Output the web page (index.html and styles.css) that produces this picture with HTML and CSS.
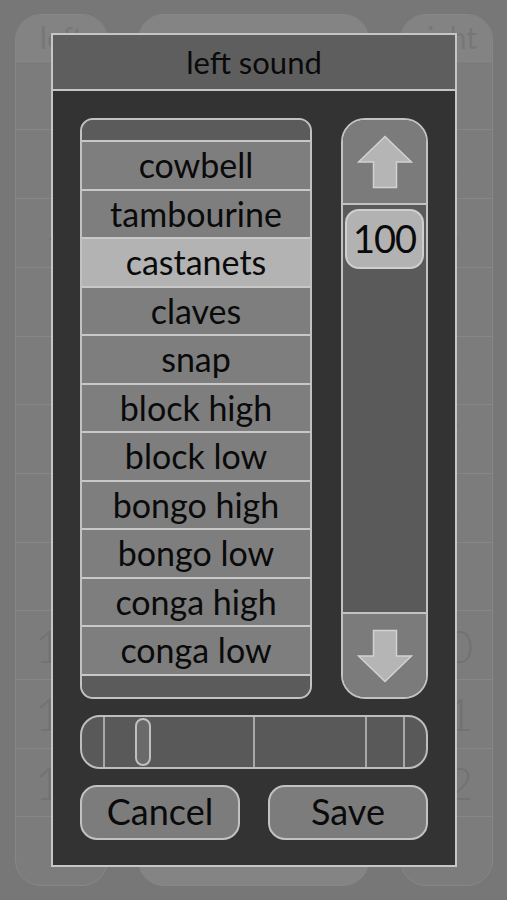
FILE: index.html
```html
<!DOCTYPE html>
<html>
<head>
<meta charset="utf-8">
<link rel="stylesheet" href="styles.css">
</head>
<body>
<div class="bg">
  <div class="card side">
    <div class="card-head">left</div>
    <div class="card-row"><span>2</span></div>
    <div class="card-row"><span>3</span></div>
    <div class="card-row"><span>4</span></div>
    <div class="card-row"><span>5</span></div>
    <div class="card-row"><span>6</span></div>
    <div class="card-row"><span>7</span></div>
    <div class="card-row"><span>8</span></div>
    <div class="card-row"><span>9</span></div>
    <div class="card-row"><span>10</span></div>
    <div class="card-row"><span>11</span></div>
    <div class="card-row"><span>12</span></div>
    <div class="card-row"></div>
  </div>
  <div class="card center"></div>
  <div class="card side">
    <div class="card-head">right</div>
    <div class="card-row"><span>2</span></div>
    <div class="card-row"><span>3</span></div>
    <div class="card-row"><span>4</span></div>
    <div class="card-row"><span>5</span></div>
    <div class="card-row"><span>6</span></div>
    <div class="card-row"><span>7</span></div>
    <div class="card-row"><span>8</span></div>
    <div class="card-row"><span>9</span></div>
    <div class="card-row"><span>10</span></div>
    <div class="card-row"><span>11</span></div>
    <div class="card-row"><span>12</span></div>
    <div class="card-row"></div>
  </div>
</div>

<div class="dialog">
  <div class="dialog-title">left sound</div>
  <div class="dialog-body">
    <div class="top">
      <div class="list">
        <div class="list-cap"></div>
        <div class="item">cowbell</div>
        <div class="item">tambourine</div>
        <div class="item selected">castanets</div>
        <div class="item">claves</div>
        <div class="item">snap</div>
        <div class="item">block high</div>
        <div class="item">block low</div>
        <div class="item">bongo high</div>
        <div class="item">bongo low</div>
        <div class="item">conga high</div>
        <div class="item">conga low</div>
        <div class="list-foot"></div>
      </div>
      <div class="stepper">
        <div class="step-btn">
          <svg width="56" height="54" viewBox="0 0 56 54"><polygon points="28,1.5 1.5,27 16.5,27 16.5,52.5 39.5,52.5 39.5,27 54.5,27" class="arrow"/></svg>
        </div>
        <div class="track">
          <div class="badge">100</div>
        </div>
        <div class="step-btn">
          <svg width="56" height="54" viewBox="0 0 56 54"><polygon points="28,52.5 1.5,27 16.5,27 16.5,1.5 39.5,1.5 39.5,27 54.5,27" class="arrow"/></svg>
        </div>
      </div>
    </div>
    <div class="slider">
      <div class="tick t1"></div>
      <div class="tick t2"></div>
      <div class="tick t3"></div>
      <div class="tick t4"></div>
      <div class="thumb"></div>
    </div>
    <div class="buttons">
      <div class="btn">Cancel</div>
      <div class="btn">Save</div>
    </div>
  </div>
</div>
</body>
</html>
```

FILE: styles.css
```css
* { box-sizing: border-box; }
html, body { margin: 0; padding: 0; }
body {
  width: 507px;
  height: 900px;
  background: #777777;
  font-family: "Lato", "Open Sans", sans-serif;
  position: relative;
  overflow: hidden;
}

/* background app */
.bg {
  display: flex;
  padding: 14px 0 0 15px;
}
.card {
  height: 872px;
  border: 1px solid #878787;
  border-radius: 26px;
  background: #7c7c7c;
  overflow: hidden;
}
.side { width: 93px; display: flex; flex-direction: column; }
.center { width: 231px; margin: 0 31px 0 30px; background: #848484; }
.card-head {
  height: 48px;
  background: #838383;
  color: #777777;
  font-size: 30px;
  text-align: center;
  line-height: 44px;
}
.card-row {
  height: 72px;
  border-top: 1px solid #878787;
  display: flex;
  align-items: center;
  justify-content: center;
  color: #727272;
  font-size: 46px;
  font-weight: 300;
}

/* dialog */
.dialog {
  position: absolute;
  left: 51px;
  top: 33px;
  width: 406px;
  height: 834px;
  border: 2px solid #c6c6c6;
  background: #333333;
  display: flex;
  flex-direction: column;
}
.dialog-title {
  height: 56px;
  background: #5e5e5e;
  border-bottom: 2px solid #c6c6c6;
  color: #0a0a0a;
  font-size: 31px;
  text-align: center;
  line-height: 54px;
}
.dialog-body {
  padding: 27px 27px 26px 27px;
  display: flex;
  flex-direction: column;
  gap: 16px;
}
.top {
  display: flex;
  justify-content: space-between;
  height: 581px;
}

.list {
  width: 232px;
  border: 2px solid #c2c2c2;
  border-radius: 13px;
  overflow: hidden;
  background: #7e7e7e;
  display: flex;
  flex-direction: column;
}
.list-cap {
  height: 20px;
  background: #5b5b5b;
}
.item {
  height: 48.5px;
  border-top: 2px solid #c8c8c8;
  color: #0a0a0a;
  font-size: 34px;
  text-align: center;
  line-height: 46px;
}
.item.selected { background: #b3b3b3; }
.list-foot {
  flex: 1;
  border-top: 2px solid #c8c8c8;
  background: #5b5b5b;
}

.stepper {
  width: 87px;
  border: 2px solid #c2c2c2;
  border-radius: 24px;
  overflow: hidden;
  display: flex;
  flex-direction: column;
  background: #5a5a5a;
}
.step-btn {
  height: 83px;
  background: #7b7b7b;
  display: flex;
  align-items: center;
  justify-content: center;
}
.arrow {
  fill: #b5b5b5;
  stroke: #d2d2d2;
  stroke-width: 1.5;
}
.track {
  flex: 1;
  border-top: 2px solid #c2c2c2;
  border-bottom: 2px solid #c2c2c2;
  padding: 4px 2px;
}
.badge {
  height: 60px;
  border: 2px solid #cfcfcf;
  border-radius: 14px;
  background: #b2b2b2;
  color: #0a0a0a;
  font-size: 38px;
  text-align: center;
  line-height: 54px;
  letter-spacing: -1px;
}

.slider {
  position: relative;
  height: 54px;
  border: 2px solid #bdbdbd;
  border-radius: 20px;
  background: #595959;
}
.tick {
  position: absolute;
  top: 0;
  bottom: 0;
  width: 2px;
  background: #a8a8a8;
}
.t1 { left: 21px; }
.t2 { left: 171px; }
.t3 { left: 283px; }
.t4 { left: 321px; }
.thumb {
  position: absolute;
  left: 53px;
  top: 1px;
  width: 16px;
  height: 48px;
  border: 2px solid #c0c0c0;
  border-radius: 8px;
  background: #6a6a6a;
}

.buttons {
  display: flex;
  justify-content: space-between;
}
.btn {
  width: 160px;
  height: 55px;
  border: 2px solid #c2c2c2;
  border-radius: 17px;
  background: #7c7c7c;
  color: #0a0a0a;
  font-size: 36px;
  text-align: center;
  line-height: 49px;
}
```
